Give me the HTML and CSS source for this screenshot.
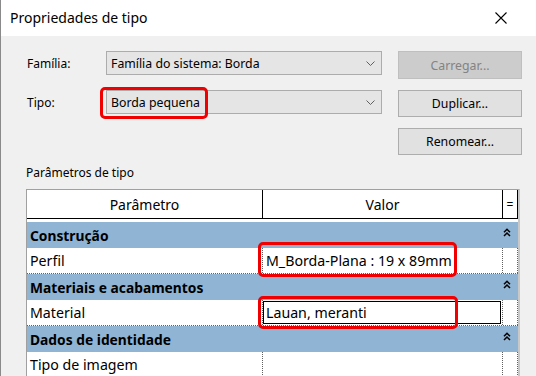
FILE: index.html
```html
<!DOCTYPE html>
<html lang="pt">
<head>
<meta charset="utf-8">
<link rel="stylesheet" href="styles.css">
</head>
<body>
<div class="window">
  <div class="titlebar">
    <span class="title">Propriedades de tipo</span>
    <svg class="close" width="12" height="12" viewBox="0 0 12 12"><path d="M0.5 0.5 L11.5 11.5 M11.5 0.5 L0.5 11.5" stroke="#000" stroke-width="1.1" fill="none"/></svg>
  </div>
  <div class="content">
    <div class="form">
      <div class="label">Família:</div>
      <div class="combo"><span>Família do sistema: Borda</span>
        <svg class="chev" width="9" height="5" viewBox="0 0 9 5"><path d="M0.5 0.5 L4.5 4.5 L8.5 0.5" stroke="#606060" stroke-width="1" fill="none"/></svg>
      </div>
      <div class="btn disabled">Carregar...</div>

      <div class="label">Tipo:</div>
      <div class="combo"><span>Borda pequena</span>
        <svg class="chev" width="9" height="5" viewBox="0 0 9 5"><path d="M0.5 0.5 L4.5 4.5 L8.5 0.5" stroke="#606060" stroke-width="1" fill="none"/></svg>
        <div class="mark mark-tipo"></div>
      </div>
      <div class="btn">Duplicar...</div>

      <div class="label"></div>
      <div></div>
      <div class="btn">Renomear...</div>
    </div>

    <div class="section">Parâmetros de tipo</div>

    <div class="table">
      <div class="thead">
        <div class="th">Parâmetro</div>
        <div class="th">Valor</div>
        <div class="th eq">=</div>
      </div>
      <div class="tbody">
        <div class="group"><span>Construção</span><svg class="up" width="8" height="9" viewBox="0 0 8 9"><path d="M1 4.2 L4 1.2 L7 4.2 M1 8 L4 5 L7 8" stroke="#000" stroke-width="1.5" fill="none"/></svg></div>
        <div class="row"><div class="c1">Perfil</div><div class="c2">M_Borda-Plana : 19 x 89mm</div><div class="c3"></div></div>
        <div class="group"><span>Materiais e acabamentos</span><svg class="up" width="8" height="9" viewBox="0 0 8 9"><path d="M1 4.2 L4 1.2 L7 4.2 M1 8 L4 5 L7 8" stroke="#000" stroke-width="1.5" fill="none"/></svg></div>
        <div class="row"><div class="c1">Material</div><div class="c2"><div class="edit">Lauan, meranti</div></div><div class="c3"></div></div>
        <div class="group"><span>Dados de identidade</span><svg class="up" width="8" height="9" viewBox="0 0 8 9"><path d="M1 4.2 L4 1.2 L7 4.2 M1 8 L4 5 L7 8" stroke="#000" stroke-width="1.5" fill="none"/></svg></div>
        <div class="row"><div class="c1">Tipo de imagem</div><div class="c2"></div><div class="c3"></div></div>
      </div>
      <div class="mark mark-perfil"></div>
      <div class="mark mark-material"></div>
    </div>
  </div>
</div>
</body>
</html>
```
FILE: styles.css
```css
html, body {
  margin: 0;
  padding: 0;
}
body {
  width: 536px;
  height: 376px;
  overflow: hidden;
  font-family: "Segoe UI", "Noto Sans", sans-serif;
  font-size: 12px;
  color: #000;
  background: #f0f0f0;
}
.window {
  height: 376px;
  border-left: 1px solid #8a8a8a;
  box-sizing: border-box;
  display: flex;
  flex-direction: column;
}
.titlebar {
  height: 36px;
  background: #fff;
  display: flex;
  align-items: center;
  justify-content: space-between;
  padding: 0 29px 0 9px;
  flex: none;
}
.title {
  font-size: 14px;
  margin-top: -1px;
}
.content {
  flex: 1;
  background: #f0f0f0;
  padding: 15px 0 0 26px;
  position: relative;
}
.form {
  display: grid;
  grid-template-columns: 63px 276px 124px;
  column-gap: 16px;
  grid-template-rows: 28px 27px 27px;
  row-gap: 11px;
}
.label {
  display: flex;
  align-items: center;
  height: 24px;
}
.combo {
  position: relative;
  height: 24px;
  box-sizing: border-box;
  border: 1px solid #acacac;
  background: #e5e5e5;
  display: flex;
  align-items: center;
  justify-content: space-between;
  padding: 0 6px 0 4px;
  font-size: 12.3px;
}
.chev {
  margin-top: 1px;
}
.btn {
  box-sizing: border-box;
  height: 27px;
  border: 1px solid #adadad;
  background: #e1e1e1;
  display: flex;
  align-items: center;
  justify-content: center;
  font-size: 12.3px;
}
.btn.disabled {
  background: #cccccc;
  border-color: #bfbfbf;
  color: #838383;
  height: 28px;
}
.mark {
  position: absolute;
  border: 3px solid #f00000;
  border-radius: 5px;
  box-sizing: border-box;
  pointer-events: none;
}
.mark-tipo {
  left: -7px;
  top: -4px;
  width: 108px;
  height: 32px;
}
.section {
  margin-top: 10px;
  margin-left: -1px;
  height: 16px;
  line-height: 16px;
}
.table {
  position: relative;
  margin-top: 8px;
  margin-left: -1px;
  width: 494px;
  height: 200px;
  box-sizing: border-box;
  border-left: 1px solid #a0a0a0;
  border-top: 1px solid #a0a0a0;
  border-right: 2px solid #c8c8c8;
  background: #fff;
}
.thead {
  display: grid;
  grid-template-columns: 236px 240px 15px;
  height: 29px;
}
.th {
  box-sizing: border-box;
  border-right: 1px solid #000;
  border-bottom: 1px solid #000;
  display: flex;
  align-items: center;
  justify-content: center;
  font-size: 14px;
  background: #fff;
}
.th.eq {
  font-size: 12px;
}
.tbody {
  margin-top: 3px;
}
.group {
  height: 26px;
  width: 491px;
  background: #8fb4d4;
  display: flex;
  align-items: center;
  justify-content: space-between;
  padding: 0 7px 0 3px;
  box-sizing: border-box;
  font-weight: bold;
  font-size: 13.8px;
}
.up {
  margin-top: -5px;
}
.row {
  display: grid;
  grid-template-columns: 236px 240px 15px;
  height: 26px;
  box-sizing: border-box;
  border-bottom: 1px dotted #606060;
  width: 491px;
  font-size: 14.2px;
}
.c1 {
  padding-left: 3px;
  display: flex;
  align-items: center;
  border-right: 1px dotted #606060;
}
.c2 {
  padding-left: 3px;
  display: flex;
  align-items: center;
  border-right: 1px dotted #606060;
}
.c3 {
  border-right: 1px dotted #606060;
}
.edit {
  box-sizing: border-box;
  width: 238px;
  height: 23px;
  margin-left: -3px;
  border: 1px solid #000;
  display: flex;
  align-items: center;
  padding-left: 2px;
}
.mark-perfil {
  left: 231px;
  top: 52px;
  width: 199px;
  height: 35px;
}
.mark-material {
  left: 231px;
  top: 106px;
  width: 200px;
  height: 33px;
}
```
